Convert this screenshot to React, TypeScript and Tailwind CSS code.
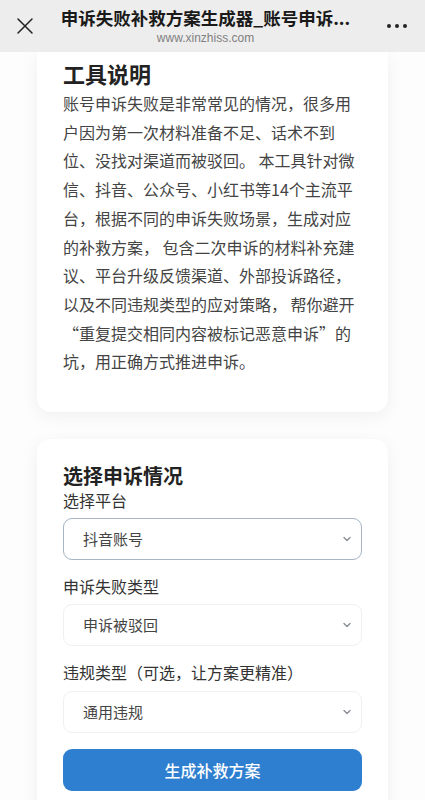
import { FC } from "react";

const font = { fontFamily: '"Noto Sans CJK SC", "Noto Sans", sans-serif' };

const intro = [
	"账号申诉失败是非常常见的情况，很多用",
	"户因为第一次材料准备不足、话术不到",
	"位、没找对渠道而被驳回。 本工具针对微",
	"信、抖音、公众号、小红书等14个主流平",
	"台，根据不同的申诉失败场景，生成对应",
	"的补救方案， 包含二次申诉的材料补充建",
	"议、平台升级反馈渠道、外部投诉路径，",
	"以及不同违规类型的应对策略， 帮你避开",
	"“重复提交相同内容被标记恶意申诉”的",
	"坑，用正确方式推进申诉。",
];

const Chevron: FC = () => (
	<svg
		className="pointer-events-none absolute right-[9px] top-1/2 -translate-y-1/2"
		width="12"
		height="12"
		viewBox="0 0 12 12"
		fill="none"
		stroke="#8a8f96"
		strokeWidth="1.4"
		strokeLinecap="round"
		strokeLinejoin="round"
	>
		<path d="M3 4.5l3 3 3-3" />
	</svg>
);

const Select: FC<{ value: string; options: string[]; active?: boolean }> = ({
	value,
	options,
	active,
}) => (
	<div className="relative">
		<select
			defaultValue={value}
			className={
				"h-[42px] w-full appearance-none rounded-[9px] border bg-white pl-[19px] pr-8 text-[15px] text-[#444] outline-none " +
				(active ? "border-[#a6b4c4]" : "border-[#f0f0f0]")
			}
			style={font}
		>
			{options.map((o) => (
				<option key={o}>{o}</option>
			))}
		</select>
		<Chevron />
	</div>
);

const Header: FC = () => (
	<div className="relative z-10 flex h-[52px] shrink-0 items-center bg-[#ededed] px-3">
		<svg width="18" height="18" viewBox="0 0 18 18" className="ml-[4px]" stroke="#222" strokeWidth="1.5" strokeLinecap="round">
			<path d="M2 2l14 14M16 2L2 16" />
		</svg>
		<div className="flex flex-1 flex-col items-center pr-[10px]">
			<div className="text-[17.5px] font-bold leading-[22px] text-[#1a1a1a]">
				申诉失败补救方案生成器_账号申诉...
			</div>
			<div className="mt-[1px] text-[12px] leading-[16px] text-[#808080]" style={{ fontFamily: '"Liberation Sans", sans-serif' }}>
				www.xinzhiss.com
			</div>
		</div>
		<div className="mr-[6px] flex gap-[4px]">
			<span className="h-[4px] w-[4px] rounded-full bg-[#222]" />
			<span className="h-[4px] w-[4px] rounded-full bg-[#222]" />
			<span className="h-[4px] w-[4px] rounded-full bg-[#222]" />
		</div>
	</div>
);

export default function App() {
	return (
		<div className="flex h-[800px] w-[425px] flex-col overflow-hidden bg-[#fdfdfd]" style={font}>
			<Header />
			<div className="flex flex-col gap-[27px] px-[37px]">
				{/* tool description card, scrolled so its top is under the bar */}
				<div className="rounded-b-[14px] bg-white px-[26px] pb-[36px] pt-[6px] shadow-[0_4px_18px_rgba(0,0,0,0.06)]">
					<h2 className="text-[22px] font-bold leading-[30px] text-[#222]">工具说明</h2>
					<p className="mt-[1px] whitespace-nowrap text-[16px] leading-[28.7px] text-[#444]">
						{intro.map((line) => (
							<span key={line} className="block">
								{line}
							</span>
						))}
					</p>
				</div>

				{/* form card */}
				<div className="rounded-[14px] bg-white px-[26px] pb-6 pt-[24px] shadow-[0_4px_18px_rgba(0,0,0,0.06)]">
					<h2 className="text-[20px] font-bold leading-[26px] text-[#222]">选择申诉情况</h2>
					<label className="mb-[7px] block text-[16px] leading-[22px] text-[#333]">选择平台</label>
					<Select value="抖音账号" options={["抖音账号", "微信账号", "小红书账号"]} active />
					<label className="mb-[7px] mt-[15px] block text-[16px] leading-[22px] text-[#333]">申诉失败类型</label>
					<Select value="申诉被驳回" options={["申诉被驳回", "申诉无回复"]} />
					<label className="mb-[8px] mt-[15px] block text-[16px] leading-[22px] text-[#333]">违规类型（可选，让方案更精准）</label>
					<Select value="通用违规" options={["通用违规", "营销违规"]} />
					<button className="mt-[16px] h-[42px] w-full rounded-[9px] bg-[#2f7fd0] text-[16px] font-medium text-white">
						生成补救方案
					</button>
				</div>
			</div>
		</div>
	);
}
